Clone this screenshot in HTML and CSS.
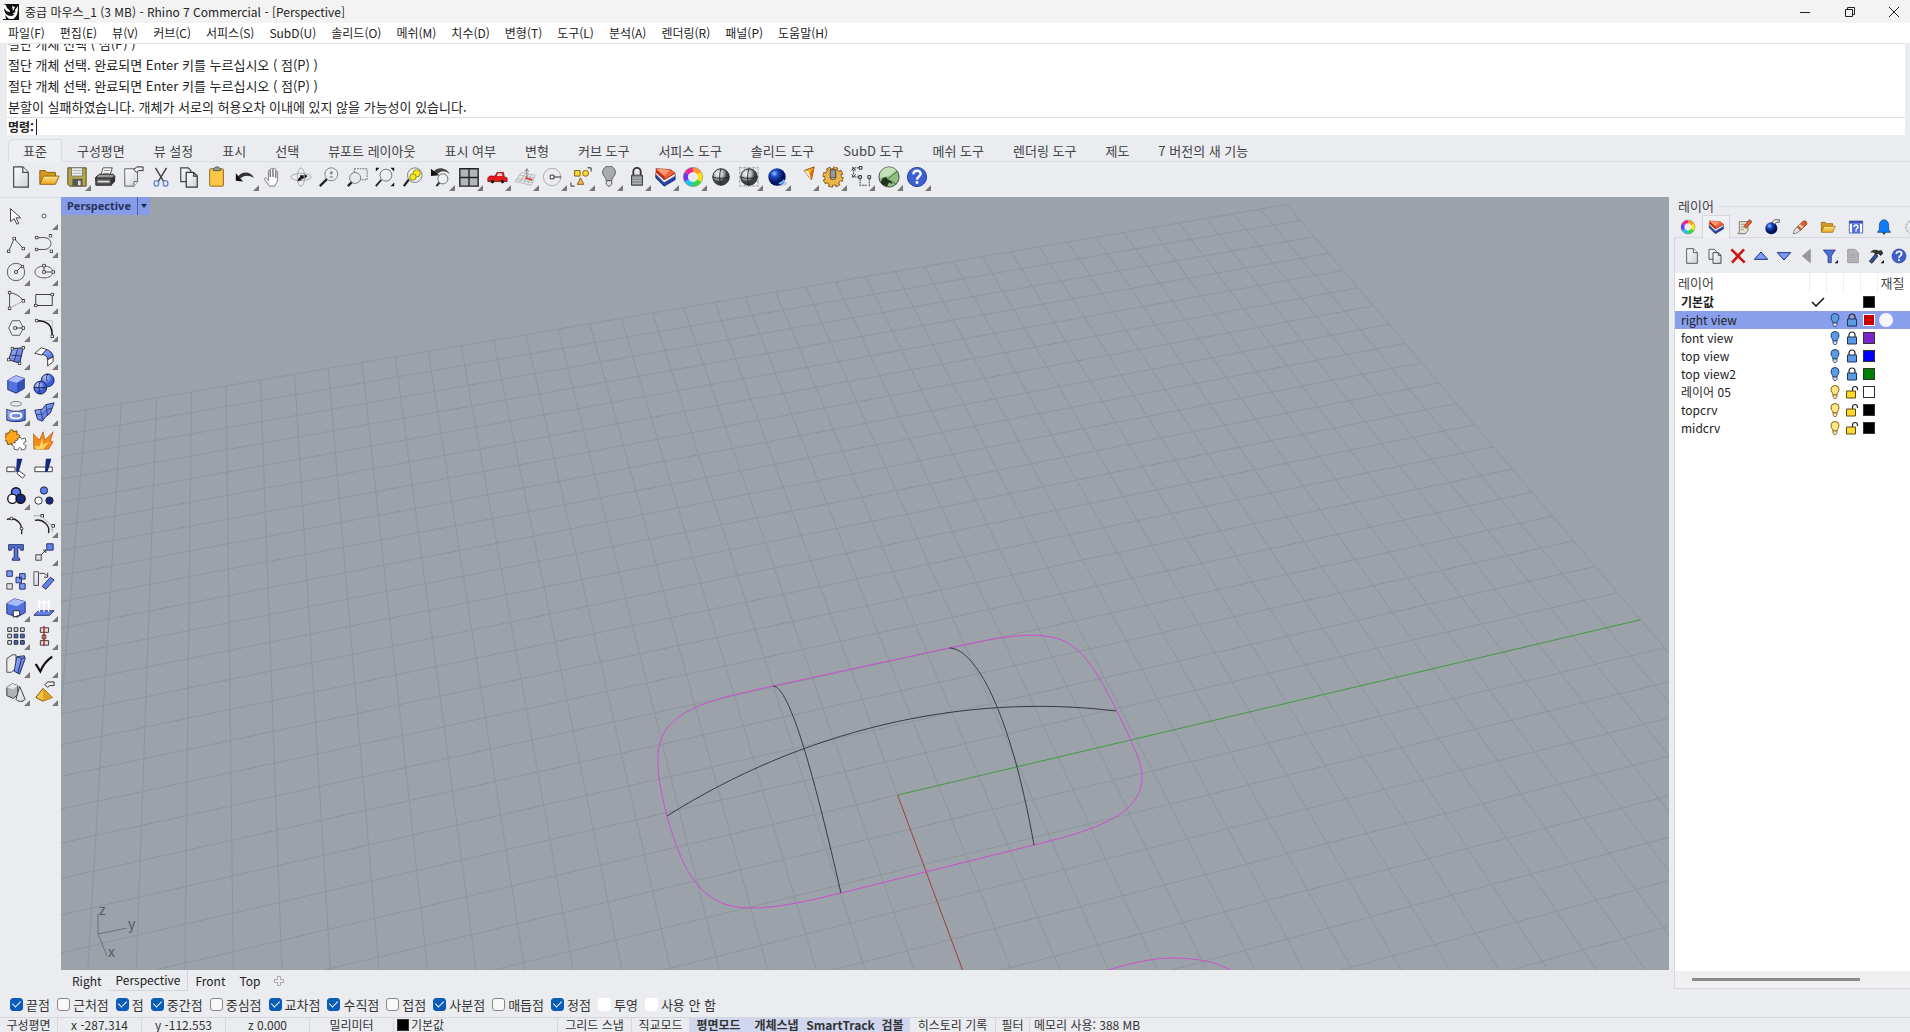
FILE: index.html
```
<!DOCTYPE html>
<html lang="ko">
  <head>
    <meta charset="utf-8"/>
    <title>중급 마우스_1 (3 MB) - Rhino 7 Commercial - [Perspective]</title>
    <link rel="stylesheet" href="styles.css">
  </head>
  <body>
    <!-- shared icons -->
    <svg class="defs" width="0" height="0">
      <defs>
        <linearGradient id="paper" x2="1" y2="1"><stop offset="0" stop-color="#fff"/><stop offset="1" stop-color="#cfd2d4"/></linearGradient>
        <linearGradient id="blue" x2="1" y2="1"><stop offset="0" stop-color="#a9bcff"/><stop offset="1" stop-color="#3f5fd6"/></linearGradient>
        <linearGradient id="gold" x2="0" y2="1"><stop offset="0" stop-color="#ffe48a"/><stop offset="1" stop-color="#eba51c"/></linearGradient>
        <radialGradient id="gray" cx=".35" cy=".3"><stop offset="0" stop-color="#fff"/><stop offset=".6" stop-color="#b2b5b8"/><stop offset="1" stop-color="#3c3e40"/></radialGradient>
        <radialGradient id="deep" cx=".35" cy=".3"><stop offset="0" stop-color="#9fc4ff"/><stop offset=".4" stop-color="#1b50c8"/><stop offset="1" stop-color="#04145c"/></radialGradient>
        <radialGradient id="ball" cx=".35" cy=".3"><stop offset="0" stop-color="#c4d1ff"/><stop offset="1" stop-color="#3c5cd4"/></radialGradient>
      </defs>
      <symbol id="i-page" viewBox="0 0 24 24"><path d="M4 1h10l6 6v16H4z" fill="url(#paper)" stroke="#44474a" stroke-width="1.300"/><path d="M14 1v6h6" fill="#fff" stroke="#44474a" stroke-width="1.300"/></symbol>
      <symbol id="i-copy" viewBox="0 0 24 24"><path d="M3 2h8l3 3v12H3z" fill="url(#paper)" stroke="#44474a" stroke-width="1.300"/><path d="M9 7h8l4 4v12H9z" fill="url(#paper)" stroke="#333639" stroke-width="1.300"/><path d="M17 7v4h4" fill="none" stroke="#333639" stroke-width="1.300"/></symbol>
      <symbol id="i-folder" viewBox="0 0 24 24"><path d="M2 19V5h6l2 2h9v4" fill="#d99a1b" stroke="#7a5a12"/><path d="M2 20l4-9h17l-4 9z" fill="url(#gold)" stroke="#8a6414"/></symbol>
      <symbol id="i-layers" viewBox="0 0 24 24"><path d="M2 8v5l9 9 12-7V9l-12 7z" fill="#2344a8" stroke="#1a2c70"/><path d="M2 6v3l9 9 12-7V8l-12 7z" fill="#f5f5f5" stroke="#777" stroke-width=".6"/><path d="M2 3l9 8v4L2 7z" fill="#c92c0c"/><path d="M2 3l16 1 5 4-12 7v-4z" fill="#f4603a" stroke="#9a2a10"/><path d="M2 3l16 1-7 7z" fill="#ff9a74"/></symbol>
      <symbol id="i-wheel" viewBox="0 0 24 24"><g fill="none" stroke-width="5"><path d="M12 4a8 8 0 0 1 6.9 4" stroke="#ff9a1e"/><path d="M18.9 8a8 8 0 0 1 0 8" stroke="#ffe800"/><path d="M18.9 16a8 8 0 0 1-6.9 4" stroke="#38d838"/><path d="M12 20a8 8 0 0 1-6.9-4" stroke="#18c8e8"/><path d="M5.1 16a8 8 0 0 1 0-8" stroke="#6a36ee"/><path d="M5.1 8A8 8 0 0 1 12 4" stroke="#f0219a"/></g><circle cx="12" cy="12" r="10.5" fill="none" stroke="#777" stroke-width=".6"/></symbol>
      <symbol id="i-help" viewBox="0 0 24 24"><circle cx="12" cy="12" r="10.5" fill="#3d5fd0" stroke="#1f3a96"/><path d="M8 9c0-5 8-5 8-.5 0 3-4 3-4 6.500" fill="none" stroke="#fff" stroke-width="2.500"/><circle cx="12" cy="18" r="1.600" fill="#fff"/></symbol>
      <symbol id="i-bulb-off" viewBox="0 0 14 14"><path d="M5 10c0-2-2-3-2-5.500a4 4 0 0 1 8 0C11 7 9 8 9 10z" fill="#5b9be6" stroke="#23426e"/><path d="M5 10h4v2l-1 1.500H6L5 12z" fill="#d5dde8" stroke="#23426e" stroke-width=".8"/></symbol>
      <symbol id="i-bulb-on" viewBox="0 0 14 14"><path d="M5 10c0-2-2-3-2-5.500a4 4 0 0 1 8 0C11 7 9 8 9 10z" fill="#ffe680" stroke="#80621a"/><path d="M5 10h4v2l-1 1.500H6L5 12z" fill="#f2e3b8" stroke="#80621a" stroke-width=".8"/></symbol>
      <symbol id="i-lock" viewBox="0 0 14 14"><path d="M4 6V4a3 3 0 0 1 6 0v2" fill="none" stroke="#222" stroke-width="1.200"/><path d="M2.500 6h9v7h-9z" fill="#5b9be6" stroke="#1e3250"/></symbol>
      <symbol id="i-unlock" viewBox="0 0 14 14"><path d="M7.500 6V4a2.500 2.500 0 0 1 5 0v1" fill="none" stroke="#222" stroke-width="1.200"/><path d="M1.500 6h9v7h-9z" fill="#ffd92e" stroke="#5a4a10"/></symbol>
      <symbol id="i-pt" viewBox="0 0 4 4"><path d="M.5.5h3v3h-3z" fill="#fff" stroke="#222"/></symbol>
    </svg>

    <header class="titlebar">
      <svg class="logo" viewBox="0 0 16 16"><path d="M0 0h16v16H0z" fill="#111"/><path d="M3 1c0 4 4 4 4 7-3 0-5-2-6-4 0 5 3 8 7 8 3 0 5-3 4-6l3-4c0 7-1 11-5 13H6l-4-4 1 4H0V0z" fill="#fff"/><path d="M9 2l3 1-2 4zM10 9l3-1-2 3z" fill="#fff"/></svg>
      <span class="title">중급 마우스_1 (3 MB) - Rhino 7 Commercial - [Perspective]</span>
      <div class="winbuttons">
        <button aria-label="최소화"><svg viewBox="0 0 12 12"><path d="M1 6.500h10"/></svg></button>
        <button aria-label="이전 크기로"><svg viewBox="0 0 12 12"><path d="M1.500 3.500h7v7h-7zM3.500 3.500v-2h7v7h-2"/></svg></button>
        <button aria-label="닫기"><svg viewBox="0 0 12 12"><path d="M1 1l10 10M11 1L1 11"/></svg></button>
      </div>
    </header>

    <nav class="menubar">
      <a href="#">파일(F)</a><a href="#">편집(E)</a><a href="#">뷰(V)</a><a href="#">커브(C)</a><a href="#">서피스(S)</a><a href="#">SubD(U)</a><a href="#">솔리드(O)</a><a href="#">메쉬(M)</a><a href="#">치수(D)</a><a href="#">변형(T)</a><a href="#">도구(L)</a><a href="#">분석(A)</a><a href="#">렌더링(R)</a><a href="#">패널(P)</a><a href="#">도움말(H)</a>
    </nav>

    <section class="command">
      <div class="history">
        <p>절단 개체 선택 ( 점(P) )</p>
        <p>절단 개체 선택. 완료되면 Enter 키를 누르십시오 ( 점(P) )</p>
        <p>절단 개체 선택. 완료되면 Enter 키를 누르십시오 ( 점(P) )</p>
        <p>분할이 실패하였습니다. 개체가 서로의 허용오차 이내에 있지 않을 가능성이 있습니다.</p>
      </div>
      <div class="prompt">
        <label for="cmd">명령:</label>
        <input type="text" id="cmd">
      </div>
    </section>

    <div class="tooltabs">
      <button class="active">표준</button><button>구성평면</button><button>뷰 설정</button><button>표시</button><button>선택</button><button>뷰포트 레이아웃</button><button>표시 여부</button><button>변형</button><button>커브 도구</button><button>서피스 도구</button><button>솔리드 도구</button><button>SubD 도구</button><button>메쉬 도구</button><button>렌더링 도구</button><button>제도</button><button>7 버전의 새 기능</button>
    </div>

    <div class="toolbar">
      <button aria-label="새로 만들기"><svg><use href="#i-page"/></svg></button>
      <button aria-label="열기"><svg><use href="#i-folder"/></svg></button>
      <button aria-label="저장" class="fly"><svg viewBox="0 0 24 24"><path d="M2 2h20v20H4l-2-2z" fill="#b5a648" stroke="#4b4620"/><path d="M6 2h12v9H6z" fill="#eef0f2" stroke="#777"/><path d="M7 5h10M7 8h10" stroke="#aaa"/><path d="M7 14h11v8H7z" fill="#555"/><path d="M13 16h3v5h-3z" fill="#ddd"/></svg></button>
      <button aria-label="인쇄"><svg viewBox="0 0 24 24"><path d="M7 11l3-9h10l-3 9z" fill="#fff" stroke="#444"/><path d="M11 5h6M10 8h6" stroke="#777"/><path d="M2 12l4-3h15l2 3-3 4H2z" fill="#999" stroke="#222"/><path d="M2 13h17v8H2z" fill="#555" stroke="#222"/><path d="M19 13l4-3v7l-4 4z" fill="#333"/><path d="M4 17h13" stroke="#ddd" stroke-width="2"/></svg></button>
      <button aria-label="문서 속성"><svg viewBox="0 0 24 24"><path d="M3 3h14v14l-4 5H3z" fill="url(#paper)" stroke="#55585b"/><path d="M17 17h-4v5" fill="#fff" stroke="#55585b"/><path d="M13 4l3-3h7v4h-5l-2 2z" fill="#eee" stroke="#222"/></svg></button>
      <button aria-label="잘라내기"><svg viewBox="0 0 24 24" fill="none"><path d="M6 2l9 15M18 2L9 17" stroke="#444" stroke-width="1.600"/><ellipse cx="7" cy="19" rx="2.500" ry="3" stroke="#6c87c6" stroke-width="1.500"/><ellipse cx="17" cy="19" rx="2.500" ry="3" stroke="#6c87c6" stroke-width="1.500"/></svg></button>
      <button aria-label="복사"><svg><use href="#i-copy"/></svg></button>
      <button aria-label="붙여넣기"><svg viewBox="0 0 24 24"><rect x="4" y="3" width="15" height="19" rx="1" fill="#fcc647" stroke="#8c6510"/><path d="M8 5V3l3-2h2l3 2v2z" fill="#999" stroke="#555"/></svg></button>
      <button aria-label="실행 취소" class="fly"><svg viewBox="0 0 24 24"><path d="M4 12c5-7 14-6 18 1-6-3-11-3-14 0z" fill="#333"/><path d="M2 8v8l8 1z" fill="#111"/></svg></button>
      <button aria-label="이동"><svg viewBox="0 0 24 24"><path d="M8 22l-5-7c-1-2 1-3 2-1l2 2V6c0-2 2-2 2 0v6-8c0-2 3-2 3 0v8-8c0-2 3-2 3 0v9-6c0-2 2-2 2 0v9l-3 6z" fill="#fff" stroke="#555" stroke-width=".8"/></svg></button>
      <button aria-label="회전"><svg viewBox="0 0 24 24" fill="none" stroke="#999" stroke-width=".8"><ellipse cx="12" cy="12" rx="11" ry="4"/><ellipse cx="12" cy="12" rx="4" ry="10"/><path d="M11 10h4v4h-4zM8 17l2-5 3 3zM16 9l3 2-3 3z" fill="#111" stroke="none"/></svg></button>
      <button aria-label="동적 줌"><svg viewBox="0 0 24 24" fill="none"><path d="M10 14l-8 8" stroke="#222" stroke-width="2.500"/><circle cx="14.500" cy="9" r="7" fill="#edf0f2" stroke="#777"/><path d="M12.500 7.500h4M14.500 5.500v4M12.500 12h4" stroke="#444" stroke-width=".8"/></svg></button>
      <button aria-label="창 줌"><svg viewBox="0 0 24 24" fill="none"><path d="M9 3h14v12H9z" stroke="#666" stroke-dasharray="2 1"/><path d="M7 17l-5 5" stroke="#222" stroke-width="2.500"/><circle cx="10" cy="13" r="6" fill="#e6e9ec" stroke="#777"/></svg></button>
      <button aria-label="범위 줌"><svg viewBox="0 0 24 24" fill="none"><path d="M8 15l-6 7" stroke="#222" stroke-width="2"/><circle cx="13" cy="10" r="6.500" fill="#edf0f2" stroke="#666"/><path d="M2 6V2h4zM18 2h4v4zM22 18v4h-4z" fill="#111"/></svg></button>
      <button aria-label="선택 줌"><svg viewBox="0 0 24 24" fill="none"><path d="M8 14l-6 8" stroke="#222" stroke-width="2.500"/><circle cx="14" cy="10" r="8" fill="#edf0f2" stroke="#777"/><circle cx="16" cy="8" r="4" fill="#f8e71c" stroke="#8d8410"/><circle cx="12" cy="12" r="3.500" fill="#f8e71c" stroke="#8d8410"/></svg></button>
      <button aria-label="뷰 변경 취소" class="fly"><svg viewBox="0 0 24 24" fill="none"><path d="M11 17l-4 5" stroke="#222" stroke-width="2"/><circle cx="14" cy="14" r="5.500" fill="#edf0f2" stroke="#666"/><path d="M4 6c5-6 14-4 18 3-5-4-10-5-14 0z" fill="#444"/><path d="M1 3v8l9-1z" fill="#111"/></svg></button>
      <button aria-label="4개 뷰포트" class="fly"><svg viewBox="0 0 24 24"><path d="M2 3h20v19H2z" fill="#b3b6b9" stroke="#222" stroke-width="1.500"/><path d="M12 3v19M2 12.500h20" stroke="#222" stroke-width="1.500"/></svg></button>
      <button aria-label="뷰 설정" class="fly"><svg viewBox="0 0 24 24"><path d="M2 13l2-2h6l2-4h7l1 5 3 1v4H2z" fill="#e31b1b" stroke="#7c0808" stroke-width=".8"/><path d="M12 11l1-3h4l1 3z" fill="#ffd2d2"/><circle cx="7" cy="17" r="2" fill="#222"/><circle cx="18" cy="17" r="2" fill="#222"/></svg></button>
      <button aria-label="구성평면" class="fly"><svg viewBox="0 0 24 24" fill="none"><path d="M1 17l7-10 15 3-4 11zM4 13l17 3M2.500 15l18 3M6 10l16 3M12 8L6 18M16 9l-5.500 10M19 9.500L15 20" stroke="#aaa" stroke-width=".8"/><path d="M14 13V4M12 6l2-3 2 3" stroke="#555" stroke-width=".8"/><path d="M12 13l8 2" stroke="#e22" stroke-width="1.500"/></svg></button>
      <button aria-label="개체 스냅" class="fly"><svg viewBox="0 0 24 24" fill="none"><circle cx="11" cy="12" r="9.500" stroke="#aaa"/><path d="M10 12h11" stroke="#222"/><path d="M9 10h4v4H9z" fill="#fff" stroke="#222"/></svg></button>
      <button aria-label="선택" class="fly"><svg viewBox="0 0 24 24" stroke="#7c5a10"><path d="M5 5h6v6H5z" fill="#ffd92e"/><circle cx="17" cy="8" r="3.200" fill="#ffd92e"/><path d="M8 20l3.500-7 3.500 7z" fill="#f9b35a"/><path d="M19 2h4v4M1 18v4h4" fill="none" stroke="#222"/></svg></button>
      <button aria-label="숨기기" class="fly"><svg viewBox="0 0 24 24"><path d="M9 16c0-4-4-5-4-9a7 7 0 0 1 14 0c0 4-4 5-4 9z" fill="#a9abad" stroke="#555"/><path d="M9 16h6v4l-2 2h-2l-2-2z" fill="#ddd" stroke="#555"/></svg></button>
      <button aria-label="잠금" class="fly"><svg viewBox="0 0 24 24"><path d="M8 10V6a4 4 0 0 1 8 0v4" fill="none" stroke="#333" stroke-width="2"/><path d="M6 10h12v11H6z" fill="#8a8d90" stroke="#333"/><path d="M7 13h10M7 16h10M7 19h10" stroke="#bbb"/></svg></button>
      <button aria-label="레이어" class="fly"><svg><use href="#i-layers"/></svg></button>
      <button aria-label="개체 속성" class="fly"><svg><use href="#i-wheel"/></svg></button>
      <button aria-label="음영 처리"><svg viewBox="0 0 24 24"><circle cx="12" cy="12" r="9" fill="url(#gray)" stroke="#222"/><path d="M12 3c-2 5-2 13 0 18M3 12c5 2 13 2 18 0" fill="none" stroke="#222"/></svg></button>
      <button aria-label="음영 처리 모드" class="fly"><svg viewBox="0 0 24 24"><path d="M1 2h22M1 7h22M1 12h22M1 17h22M1 22h22M2 1v22M7 1v22M12 1v22M17 1v22M22 1v22" stroke="#888" stroke-dasharray="1 1"/><circle cx="12" cy="12" r="9" fill="url(#gray)" stroke="#222"/><path d="M12 3c-2 5-2 13 0 18M3 12c5 2 13 2 18 0" fill="none" stroke="#222"/></svg></button>
      <button aria-label="렌더링" class="fly"><svg viewBox="0 0 24 24"><ellipse cx="15" cy="19" rx="8" ry="3" fill="#bcc6de"/><circle cx="12" cy="12" r="9.500" fill="url(#deep)"/><path d="M14 19c3 0 5-2 6-4" fill="none" stroke="#6fc0ff" stroke-width="2"/></svg></button>
      <button aria-label="광원" class="fly"><svg viewBox="0 0 24 24"><path d="M11 5l11-4-3 14z" fill="#f9b52c" stroke="#7c4a10"/><path d="M11 5l5 1 3 9z" fill="#fff0c4"/><path d="M22 1l-3 14-2-7z" fill="#df6a10"/></svg></button>
      <button aria-label="옵션" class="fly"><svg viewBox="0 0 24 24" fill="none"><circle cx="12" cy="12" r="9" stroke="#6c4a10" stroke-width="5" stroke-dasharray="4.500 2.568"/><circle cx="12" cy="12" r="6" stroke="#6c4a10" stroke-width="7"/><circle cx="12" cy="12" r="6" stroke="#edb446" stroke-width="5.500"/><circle cx="12" cy="12" r="9" stroke="#edb446" stroke-width="3.500" stroke-dasharray="3 4.068" stroke-dashoffset="-.7"/><path d="M9 4h6v9H9z" fill="#999" stroke="#444"/></svg></button>
      <button aria-label="치수" class="fly"><svg viewBox="0 0 24 24" fill="none" stroke="#222"><path d="M2 2h8M2 12h8M4 4v6M11 14v8M21 14v8M13 21h6" stroke-dasharray="2 1"/><path d="M10 .5h3v3h-3zM9.500 10.500h3v3h-3zM19.500 10.500h3v3h-3zM2 5l2-3 2 3M2 9l2 3 2-3"/></svg></button>
      <button aria-label="Grasshopper" class="fly"><svg viewBox="0 0 24 24"><circle cx="12" cy="12" r="11" fill="#8fbf82" stroke="#444"/><path d="M4 5c4-5 12-5 16 0l-8 6-10 2c0-3 0-5 2-8z" fill="#c2dfb7"/><path d="M3 18l2-5 4-1 2 3 3 1 2 4-4-2-2 4-4-1z" fill="#223322"/><path d="M11 14l10-8M14 16l6 4" stroke="#4a6a44"/></svg></button>
      <button aria-label="도움말" class="fly"><svg><use href="#i-help"/></svg></button>
    </div>

    <main class="workspace">
      <aside class="sidebar">
        <button aria-label="선택"><svg viewBox="0 0 24 24"><path d="M6 4v14l4-3 3 6 2-1-3-6h5z" fill="#fff" stroke="#333"/></svg></button>
        <button aria-label="점" class="fly"><svg viewBox="0 0 24 24"><circle cx="12" cy="12" r="2.200" fill="#fff" stroke="#444"/></svg></button>
        <button aria-label="폴리라인" class="fly"><svg viewBox="0 0 24 24"><path d="M4 20L10 6l10 11" fill="none" stroke="#444"/><use href="#i-pt" x="2" y="18" width="4" height="4"/><use href="#i-pt" x="8" y="4" width="4" height="4"/><use href="#i-pt" x="18" y="15" width="4" height="4"/></svg></button>
        <button aria-label="커브" class="fly"><svg viewBox="0 0 24 24"><path d="M4 5h8c10 0 10 13 0 13H4" fill="none" stroke="#444"/><use href="#i-pt" x="2" y="3" width="4" height="4"/><use href="#i-pt" x="17" y="1" width="4" height="4"/><use href="#i-pt" x="2" y="16" width="4" height="4"/><use href="#i-pt" x="18" y="18" width="4" height="4"/></svg></button>
        <button aria-label="원" class="fly"><svg viewBox="0 0 24 24"><circle cx="12" cy="12" r="9.500" fill="none" stroke="#555"/><path d="M12 12l6-6" stroke="#333"/><use href="#i-pt" x="10" y="10" width="4" height="4"/><use href="#i-pt" x="17" y="4" width="4" height="4"/></svg></button>
        <button aria-label="타원" class="fly"><svg viewBox="0 0 24 24"><ellipse cx="12" cy="12" rx="10" ry="6.500" fill="none" stroke="#555"/><path d="M12 6v6h10" fill="none" stroke="#333"/><use href="#i-pt" x="10" y="10" width="4" height="4"/><use href="#i-pt" x="10" y="3" width="4" height="4"/><use href="#i-pt" x="20" y="10" width="4" height="4"/></svg></button>
        <button aria-label="호" class="fly"><svg viewBox="0 0 24 24"><path d="M5 21V4c7 1 12 4 15 9" fill="none" stroke="#444"/><path d="M5 21l15-8" stroke="#888" stroke-dasharray="2 1"/><use href="#i-pt" x="3" y="2" width="4" height="4"/><use href="#i-pt" x="3" y="19" width="4" height="4"/><use href="#i-pt" x="18" y="11" width="4" height="4"/></svg></button>
        <button aria-label="직사각형" class="fly"><svg viewBox="0 0 24 24"><path d="M3 6h18v12H3z" fill="none" stroke="#333"/><use href="#i-pt" x="19" y="4" width="4" height="4"/><use href="#i-pt" x="1" y="16" width="4" height="4"/></svg></button>
        <button aria-label="다각형" class="fly"><svg viewBox="0 0 24 24"><path d="M4 12l4-8h8l4 8-4 8H8z" fill="none" stroke="#555"/><path d="M12 12h8" stroke="#333"/><use href="#i-pt" x="9" y="10" width="4" height="4"/><use href="#i-pt" x="18" y="10" width="4" height="4"/></svg></button>
        <button aria-label="필렛" class="fly"><svg viewBox="0 0 24 24"><path d="M4 4h17v18" fill="none" stroke="#bbb"/><path d="M4 4c12 0 17 5 17 17" fill="none" stroke="#111" stroke-width="1.600"/><use href="#i-pt" x="2" y="2" width="4" height="4"/><use href="#i-pt" x="19" y="19" width="4" height="4"/></svg></button>
        <button aria-label="서피스" class="fly"><svg viewBox="0 0 24 24"><path d="M8 4l12-1-4 17-12-4z" fill="url(#blue)" stroke="#223"/><path d="M14 3.500L10 18M6 11l12 1" stroke="#223" stroke-width=".8"/><use href="#i-pt" x="6" y="2" width="4" height="4"/><use href="#i-pt" x="18" y="1" width="4" height="4"/><use href="#i-pt" x="2" y="14" width="4" height="4"/><use href="#i-pt" x="14" y="18" width="4" height="4"/></svg></button>
        <button aria-label="서피스 필렛" class="fly"><svg viewBox="0 0 24 24"><path d="M2 9l7-6 6 2-5 6z" fill="#fff" stroke="#333"/><path d="M15 5c5 2 7 5 7 8l-6 3c0-3-2-5-6-6z" fill="url(#blue)" stroke="#223"/><path d="M22 13v5l-6 5v-7z" fill="#fff" stroke="#333"/></svg></button>
        <button aria-label="솔리드" class="fly"><svg viewBox="0 0 24 24"><path d="M3 8l9-5 9 3v11l-9 5-9-4z" fill="#5272e0" stroke="#1c2a60"/><path d="M3 8l9-5 9 3-8 5z" fill="#a9bcff"/><path d="M13 11l8-5v11l-8 5z" fill="#3450b8"/></svg></button>
        <button aria-label="부울" class="fly"><svg viewBox="0 0 24 24"><circle cx="16" cy="8" r="7" fill="url(#ball)" stroke="#172050"/><circle cx="8" cy="16" r="7" fill="url(#ball)" stroke="#172050"/><path d="M8 9c-2 4-2 9 0 14M1 16h14M16 1c-2 4-2 6 0 8" fill="none" stroke="#172050"/></svg></button>
        <button aria-label="투영" class="fly"><svg viewBox="0 0 24 24"><ellipse cx="12" cy="3" rx="6" ry="2.500" fill="none" stroke="#777"/><path d="M2 9c6 3 14 3 20 0v12c-6 2-14 2-20 0z" fill="url(#blue)" stroke="#1c2a60"/><ellipse cx="12" cy="16" rx="6" ry="3" fill="none" stroke="#fff" stroke-width="2"/></svg></button>
        <button aria-label="메쉬" class="fly"><svg viewBox="0 0 24 24"><path d="M2 10l8-1 4-5 9-2-4 11-5 4-4 5-5-2z" fill="url(#blue)" stroke="#1c2a60"/><path d="M8 9l3 12M14 4l2 12M4 15l7-1 5-5 5-1" fill="none" stroke="#1c2a60" stroke-width=".8"/></svg></button>
        <button aria-label="결합"><svg viewBox="0 0 24 24"><path d="M1 5l4-1c-1-4 5-4 4-1l4-1v4c4-1 4 5 1 4l1 4-4 1c1 3-5 4-4 1l-4 1-1-4c-3 1-4-4-1-4z" fill="#fba61d" stroke="#6c4208"/><path d="M11 13l3-1c-1-3 4-4 4-1l4-1 1 4c-4 0-3 4 0 4l-1 4-4 1c0-4-4-3-4 0l-4-1v-3c-3 0-3-5 1-4z" fill="#fff" stroke="#555"/></svg></button>
        <button aria-label="분해"><svg viewBox="0 0 24 24"><path d="M1 22L0 5l7 7 4-9 2 9 9-9-3 10 3 1-5 8z" fill="#f08a1d" stroke="#a34a08" stroke-width=".6"/><path d="M3 22l-1-4 5 1 3-9 1 7 7-3-7 8z" fill="#ffd25a"/></svg></button>
        <button aria-label="트림"><svg viewBox="0 0 24 24"><path d="M2 11h9v5H2zM15 15l7 5-3 3-6-5z" fill="#fff" stroke="#333"/><path d="M13 2h6l-4 14h-3z" fill="#17297c"/></svg></button>
        <button aria-label="분할"><svg viewBox="0 0 24 24"><path d="M2 11h19v5H2z" fill="#fff" stroke="#333"/><path d="M14 2h6l-4 14h-3z" fill="#17297c"/></svg></button>
        <button aria-label="그룹" class="fly"><svg viewBox="0 0 24 24" stroke="#111" stroke-width="1.500"><circle cx="12" cy="8" r="5" fill="#5b7bf2"/><circle cx="8" cy="15" r="5" fill="#fff"/><circle cx="17" cy="15" r="5" fill="#17297c"/></svg></button>
        <button aria-label="그룹 해제"><svg viewBox="0 0 24 24" stroke="#222"><circle cx="12" cy="6" r="4" fill="#5b7bf2"/><circle cx="6" cy="17" r="4" fill="#fff"/><circle cx="18" cy="17" r="4" fill="#17297c"/></svg></button>
        <button aria-label="점 편집"><svg viewBox="0 0 24 24"><path d="M2 7c11-3 18 5 16 16" fill="none" stroke="#222" stroke-width="1.500"/><circle cx="7" cy="6" r="1.500" fill="#fff" stroke="#222"/><circle cx="18" cy="17" r="1.500" fill="#fff" stroke="#222"/></svg></button>
        <button aria-label="제어점" class="fly"><svg viewBox="0 0 24 24"><path d="M2 8c9-2 17 6 15 14" fill="none" stroke="#222" stroke-width="1.500"/><path d="M1 3h8l12 12v6" fill="none" stroke="#777" stroke-dasharray="2 1"/><use href="#i-pt" x="8" y="1" width="4" height="4"/><use href="#i-pt" x="20" y="12" width="4" height="4"/></svg></button>
        <button aria-label="문자"><svg viewBox="0 0 24 24"><path d="M4 4h16v6h-3l-1-3h-2v11l2 1v2H8v-2l2-1V7H8l-1 3H4z" fill="#5272e0" stroke="#1c2a60"/></svg></button>
        <button aria-label="이동" class="fly"><svg viewBox="0 0 24 24"><path d="M15 3h7v7h-7z" fill="#6482ee" stroke="#1c2a60"/><path d="M3 15h6v6H3z" fill="#ddd" stroke="#444"/><path d="M9 15l5-5M11 10h3v3" stroke="#222" fill="none"/></svg></button>
        <button aria-label="복사"><svg viewBox="0 0 24 24"><path d="M2 2h6v6H2zM16 5h6v6h-6zM12 9h6v6h-6zM16 16h6v6h-6z" fill="#7f9af5" stroke="#1c2a60"/><path d="M2 16h6v6H2z" fill="#ddd" stroke="#444"/></svg></button>
        <button aria-label="회전"><svg viewBox="0 0 24 24"><path d="M1 3h5v15H1z" fill="url(#paper)" stroke="#444"/><path d="M10 19L19 9l4 3-9 10z" fill="#6482ee" stroke="#1c2a60"/><path d="M7 5c4-1 7 0 9 3M16 4v5h-4" fill="none" stroke="#333"/></svg></button>
        <button aria-label="크기 조정" class="fly"><svg viewBox="0 0 24 24"><path d="M2 7l8-5 12 3v12l-9 5-11-4z" fill="#5272e0" stroke="#1c2a60"/><path d="M2 7l8-5 12 3-9 5z" fill="#a9bcff"/><path d="M9 15h7v5l-7 2z" fill="#fff" stroke="#222"/></svg></button>
        <button aria-label="오프셋" class="fly"><svg viewBox="0 0 24 24"><path d="M1 20l5-5h17l-5 5z" fill="#6482ee" stroke="#1c2a60"/><path d="M7 16V4M12 16V4M17 16V4M5 7l2-3 2 3M10 7l2-3 2 3M15 7l2-3 2 3" fill="none" stroke="#fff" stroke-width="1.500"/></svg></button>
        <button aria-label="배열" class="fly"><svg viewBox="0 0 24 24" stroke="#222"><path d="M3 3h4v4H3zM10 3h4v4h-4zM17 3h4v4h-4zM3 10h4v4H3zM3 17h4v4H3z" fill="#dfe5ff"/><path d="M10 10h4v4h-4zM17 10h4v4h-4zM10 17h4v4h-4zM17 17h4v4h-4z" fill="#4a68dc"/></svg></button>
        <button aria-label="정렬" class="fly"><svg viewBox="0 0 24 24"><path d="M8 3h9v5H8zM10 11h4v4h-4zM8 17h9v5H8z" fill="#ddd" stroke="#333"/><path d="M12 1v22" stroke="#d11" stroke-width="1.500"/></svg></button>
        <button aria-label="방향" class="fly"><svg viewBox="0 0 24 24"><path d="M2 6l6-4h4v15l-5 4H2z" fill="#eee" stroke="#444"/><path d="M13 4l8-1 1 3-6 17-6-3z" fill="url(#blue)" stroke="#1c2a60"/><path d="M13 4l5 2 4-1M18 6l-4 16" fill="none" stroke="#1c2a60"/></svg></button>
        <button aria-label="확인" class="fly"><svg viewBox="0 0 24 24"><path d="M3 12l5 8C11 13 15 8 21 4" fill="none" stroke="#111" stroke-width="2.500"/></svg></button>
        <button aria-label="블록" class="fly"><svg viewBox="0 0 24 24"><path d="M2 7l6-4 6 2v10l-5 4-7-3z" fill="#b0b3b6" stroke="#333"/><path d="M2 7l6-4 6 2-5 4z" fill="#e4e6e8"/><path d="M16 6l6 14c-2 3-8 3-10 0z" fill="url(#paper)" stroke="#333"/></svg></button>
        <button aria-label="분석" class="fly"><svg viewBox="0 0 24 24"><path d="M11 8l10 10-10 4-8-4z" fill="#f6c343" stroke="#6c4a08"/><path d="M11 8l10 10-10 4z" fill="#e0a020"/><path d="M13 4l3-3h7v4h-5l-2 2z" fill="#eee" stroke="#222"/></svg></button>
      </aside>

      <section class="viewarea">
        <div class="viewport">
          <svg class="scene" viewBox="61 197 1608 773" preserveAspectRatio="xMinYMin slice">
            <g id="grid" class="grid"></g>
            <g id="axes"></g>
            <path class="outline" d="M773 686L949 648C1000 637 1040 629 1066 642C1090 655 1103 685 1117 711C1128 735 1142 760 1142 777C1142 815 1095 830 1034 845L841 893C800 903 775 908 750 908C700 908 682 870 667 816C660 790 657 770 658 755C660 710 710 700 773 686Z"/>
            <path class="outline" d="M1105 971C1140 960 1160 958 1175 958C1205 959 1218 963 1232 971"/>
            <path class="curve" d="M773 686C790 686 815 780 841 893M949 648C975 648 1010 710 1034 845M667 816C800 732 960 692 1116 711"/>
            <path class="triad" d="M98 914V934L127 928M98 934L107 956"/>
            <g class="triadtext"><text x="99" y="915">z</text><text x="128" y="929">y</text><text x="108" y="957">x</text></g>
          </svg>
          <button class="viewname"><span>Perspective</span><i></i></button>
        </div>
        <div class="viewtabs">
          <button>Right</button><button class="active">Perspective</button><button>Front</button><button>Top</button>
          <button aria-label="뷰포트 추가"><svg viewBox="0 0 10 10"><path d="M3.500.5h3v3h3v3h-3v3h-3v-3h-3v-3h3z"/></svg></button>
        </div>
      </section>

      <aside class="panel">
        <h2>레이어</h2>
        <div class="paneltabs">
          <button aria-label="속성"><svg><use href="#i-wheel"/></svg></button>
          <button aria-label="레이어" class="active"><svg><use href="#i-layers"/></svg></button>
          <button aria-label="메모"><svg viewBox="0 0 24 24"><path d="M5 4h13v13l-4 5H3c3-2 2-10 2-18z" fill="#e8e2d0" stroke="#444"/><path d="M7 8h7M7 12h7M7 16h5" stroke="#777"/><path d="M12 11l8-10 4 3-9 10z" fill="#e8622a" stroke="#7c2a08"/></svg></button>
          <button aria-label="렌더링"><svg viewBox="0 0 24 24"><circle cx="11" cy="14" r="9" fill="url(#deep)"/><path d="M12 5l4-4h7v4h-5l-2 3z" fill="#eee" stroke="#222"/></svg></button>
          <button aria-label="재질"><svg viewBox="0 0 24 24"><path d="M2 22c0-5 3-8 6-10l5 4c-3 4-6 6-11 6z" fill="#ddd" stroke="#555"/><path d="M8 12l9-9c4-1 6 2 5 5l-9 9z" fill="#e0622a" stroke="#6c2a08"/><path d="M11 9l5 4" stroke="#f5e6dc" stroke-width="3"/></svg></button>
          <button aria-label="라이브러리"><svg><use href="#i-folder"/></svg></button>
          <button aria-label="도움말"><svg viewBox="0 0 24 24"><path d="M2 3h20v18H2z" fill="#fff" stroke="#1c2a80"/><path d="M2 3h20v4H2z" fill="#3b51b5"/><path d="M6 7h12v14H6z" fill="#5272d8"/><path d="M9 12c0-4 6-4 6 0 0 2-3 2-3 4M12 17v2" stroke="#fff" stroke-width="2" fill="none"/></svg></button>
          <button aria-label="알림"><svg viewBox="0 0 24 24"><path d="M12 1c5 1 7 4 7 9v6l3 4H2l3-4v-6c0-5 2-8 7-9z" fill="#0b7cf2" stroke="#123a6c"/><path d="M9 20h6l-3 4z" fill="#123a6c"/></svg></button>
          <button aria-label="표시"><svg viewBox="0 0 24 24"><circle cx="12" cy="12" r="9" fill="none" stroke="#b4b8bd" stroke-width="3" stroke-dasharray="3 2"/></svg></button>
        </div>
        <div class="paneltools">
          <button aria-label="새 레이어"><svg><use href="#i-page"/></svg></button>
          <button aria-label="새 하위 레이어"><svg><use href="#i-copy"/></svg></button>
          <button aria-label="삭제"><svg viewBox="0 0 24 24"><path d="M2 2l20 20M21 2L3 22" stroke="#cc1515" stroke-width="4"/></svg></button>
          <button aria-label="위로"><svg viewBox="0 0 24 24"><path d="M2 17L12 6l10 11z" fill="#7f9cf5" stroke="#1c2a80" stroke-width="1.500"/></svg></button>
          <button aria-label="아래로"><svg viewBox="0 0 24 24"><path d="M2 7l10 11L22 7z" fill="#7f9cf5" stroke="#1c2a80" stroke-width="1.500"/></svg></button>
          <button aria-label="한 수준 위로"><svg viewBox="0 0 24 24"><path d="M17 2v20L5 12z" fill="#999" stroke="#888"/></svg></button>
          <button aria-label="필터"><svg viewBox="0 0 24 24"><path d="M2 3h18l-6 9v10h-5V12z" fill="#4f70d8" stroke="#1c2a80"/><path d="M19 23h5v-5z" fill="#111"/></svg></button>
          <button aria-label="레이어 상태"><svg viewBox="0 0 24 24"><path d="M4 2h11l5 5v15H4z" fill="#b5b5b5" stroke="#888"/><path d="M7 10h9M7 14h9M7 18h9" stroke="#999"/></svg></button>
          <button aria-label="도구"><svg viewBox="0 0 24 24"><path d="M3 7c4-5 8-5 13-3l4-1 3 5-4 4-3-3-4 1-3-3c-2-1-4-1-6 0z" fill="#333"/><path d="M11 9l4 3-9 11-4-3z" fill="#354a9a" stroke="#111"/><path d="M19 23h5v-5z" fill="#111"/></svg></button>
          <button aria-label="도움말"><svg><use href="#i-help"/></svg></button>
        </div>
        <div class="layerlist">
          <table>
            <thead>
              <tr><th>레이어</th><th></th><th></th><th></th><th></th><th>재질</th></tr>
            </thead>
            <tbody>
              <tr class="current"><td>기본값</td><td><svg class="check" viewBox="0 0 14 10"><path d="M1 5l4 4 8-8"/></svg></td><td></td><td></td><td><i class="swatch black"></i></td><td></td></tr>
              <tr class="selected"><td>right view</td><td></td><td><svg><use href="#i-bulb-off"/></svg></td><td><svg><use href="#i-lock"/></svg></td><td><i class="swatch red"></i></td><td><i class="material"></i></td></tr>
              <tr><td>font view</td><td></td><td><svg><use href="#i-bulb-off"/></svg></td><td><svg><use href="#i-lock"/></svg></td><td><i class="swatch purple"></i></td><td></td></tr>
              <tr><td>top view</td><td></td><td><svg><use href="#i-bulb-off"/></svg></td><td><svg><use href="#i-lock"/></svg></td><td><i class="swatch blue"></i></td><td></td></tr>
              <tr><td>top view2</td><td></td><td><svg><use href="#i-bulb-off"/></svg></td><td><svg><use href="#i-lock"/></svg></td><td><i class="swatch green"></i></td><td></td></tr>
              <tr><td>레이어 05</td><td></td><td><svg><use href="#i-bulb-on"/></svg></td><td><svg><use href="#i-unlock"/></svg></td><td><i class="swatch white"></i></td><td></td></tr>
              <tr><td>topcrv</td><td></td><td><svg><use href="#i-bulb-on"/></svg></td><td><svg><use href="#i-unlock"/></svg></td><td><i class="swatch black"></i></td><td></td></tr>
              <tr><td>midcrv</td><td></td><td><svg><use href="#i-bulb-on"/></svg></td><td><svg><use href="#i-unlock"/></svg></td><td><i class="swatch black"></i></td><td></td></tr>
            </tbody>
          </table>
          <div class="scrollbar"><i></i></div>
        </div>
      </aside>
    </main>

    <div class="osnap">
      <label><input type="checkbox" checked>끝점</label>
      <label><input type="checkbox">근처점</label>
      <label><input type="checkbox" checked>점</label>
      <label><input type="checkbox" checked>중간점</label>
      <label><input type="checkbox">중심점</label>
      <label><input type="checkbox" checked>교차점</label>
      <label><input type="checkbox" checked>수직점</label>
      <label><input type="checkbox">접점</label>
      <label><input type="checkbox" checked>사분점</label>
      <label><input type="checkbox">매듭점</label>
      <label><input type="checkbox" checked>정점</label>
      <label><input type="checkbox" class="plain">투영</label>
      <label><input type="checkbox" class="plain">사용 안 함</label>
    </div>

    <footer class="status">
      <button class="w58">구성평면</button>
      <span class="w84">x -287.314</span>
      <span class="w84">y -112.553</span>
      <span class="w84">z 0.000</span>
      <button class="w84">밀리미터</button>
      <button class="layer"><i class="swatch black"></i>기본값</button>
      <button class="w74">그리드 스냅</button>
      <button class="w58">직교모드</button>
      <button class="w58 on">평면모드</button>
      <button class="w58 on">개체스냅</button>
      <button class="w70 on">SmartTrack</button>
      <button class="w34 on">검볼</button>
      <button class="w86">히스토리 기록</button>
      <button class="w34">필터</button>
      <span class="memory">메모리 사용: 388 MB</span>
    </footer>

    <script src="script.js"></script>
  </body>
</html>
```
FILE: styles.css
```
* {
  box-sizing: border-box;
}

body {
  margin: 0;
  height: 100vh;
  display: flex;
  flex-direction: column;
  overflow: hidden;
  background-color: #eaecf0;
  color: #222;
  font-family: "Noto Sans CJK KR", "Noto Sans", sans-serif;
  font-size: 13px;
  line-height: 18px;
}

button {
  margin: 0;
  padding: 0;
  border: 0;
  background: none;
  color: inherit;
  font: inherit;
  white-space: nowrap;
}

a {
  color: inherit;
  text-decoration: none;
}

.defs {
  position: absolute;
}

/* title and menu */
.titlebar {
  display: flex;
  align-items: center;
  height: 23px;
  flex: none;
  padding-left: 3px;
  background-color: #f3f3f3;
}

.logo {
  width: 16px;
  height: 16px;
  margin-right: 6px;
}

.title {
  font-size: 12px;
}

.winbuttons {
  display: flex;
  margin-left: auto;
}

.winbuttons button {
  width: 45px;
  height: 22px;
  display: flex;
  align-items: center;
  justify-content: center;
}

.winbuttons button:last-child {
  width: 32px;
  margin-left: 6px;
}

.winbuttons svg {
  width: 12px;
  height: 12px;
  fill: none;
  stroke: #222;
}

.menubar {
  display: flex;
  align-items: center;
  gap: 15px;
  height: 20px;
  flex: none;
  padding-left: 8px;
  background-color: #fff;
  font-size: 12px;
}

/* command area */
.command {
  flex: none;
  margin-left: 7px;
  margin-right: 5px;
  background-color: #fff;
  border-top: 1px solid #e4e4e6;
}

.history {
  height: 74px;
  display: flex;
  flex-direction: column;
  justify-content: flex-end;
  overflow: hidden;
  border-bottom: 1px solid #dcdde0;
}

.history p {
  flex: none;
  margin: 0;
  padding-left: 1px;
  line-height: 21px;
}

.prompt {
  display: flex;
  align-items: center;
  height: 17px;
  padding-left: 1px;
  font-size: 12px;
  font-weight: bold;
}

.prompt input {
  flex: 1;
  height: 16px;
  padding: 0;
  border: 0;
  border-left: 1px solid #222;
  margin-left: 2px;
  outline: 0;
  font: inherit;
}

/* toolbars */
.tooltabs {
  display: flex;
  flex: none;
  gap: 1px;
  margin: 4px 0 0 8px;
  height: 23px;
  border-bottom: 1px solid #dadce1;
}

.tooltabs button {
  padding: 0 14px;
  height: 23px;
  color: #444;
}

.tooltabs .active {
  border: 1px solid #dadce1;
  border-bottom: 0;
  border-radius: 6px 0 0 0;
  background-color: #edeff3;
}

.toolbar {
  display: flex;
  flex: none;
  height: 35px;
  padding: 1px 7px;
}

.toolbar button,
.sidebar button {
  width: 28px;
  height: 28px;
  display: flex;
  align-items: center;
  justify-content: center;
}

.toolbar svg,
.sidebar svg {
  width: 22px;
  height: 22px;
}

/* corner mark of buttons that open a flyout */
.fly {
  position: relative;
}

.fly::after {
  content: "";
  position: absolute;
  right: 0;
  bottom: 0;
  border-left: 6px solid transparent;
  border-bottom: 6px solid #777;
}

.workspace {
  display: grid;
  grid-template-columns: 61px 1fr 236px;
  flex: 1;
  min-height: 0;
}

.sidebar {
  display: grid;
  grid-template-columns: 28px 28px;
  grid-auto-rows: 28px;
  align-content: start;
  padding: 4px 0 0 2px;
  border-top: 1px solid #dadce1;
}

.viewarea {
  display: flex;
  flex-direction: column;
  min-width: 0;
  min-height: 0;
  margin-right: 5px;
}

.viewport {
  position: relative;
  flex: 1;
  min-height: 0;
  background-color: #9ba2a9;
}

.scene {
  display: block;
  position: absolute;
  width: 100%;
  height: 100%;
}

.grid {
  stroke: #7f868e;
  stroke-width: 1;
  opacity: .45;
}

.axis-x {
  stroke: #a04444;
}

.axis-y {
  stroke: #479e47;
}

.outline {
  fill: none;
  stroke: #cc4fcf;
}

.curve {
  fill: none;
  stroke: #373b41;
}

.triad {
  fill: none;
  stroke: #6b7077;
}

.triadtext {
  fill: #565b62;
  font-size: 14px;
}

.viewname {
  position: absolute;
  left: 0;
  top: 0;
  display: flex;
  height: 18px;
  background-color: #869ce8;
  color: #26335c;
  font-family: "Noto Sans", sans-serif;
  font-size: 11px;
  font-weight: bold;
}

.viewname span {
  padding: 0 6px;
  border-right: 1px solid #4c5fa6;
}

.viewname i {
  margin: 7px 3px;
  border: 3px solid transparent;
  border-top: 4px solid #1d2747;
  border-bottom: 0;
}

.viewtabs {
  display: flex;
  flex: none;
  height: 21px;
  padding-left: 4px;
  font-size: 12px;
}

.viewtabs button {
  padding: 0 7px;
}

.viewtabs .active {
  border-right: 1px solid #d2d5da;
  border-bottom: 1px solid #d2d5da;
}

.viewtabs svg {
  width: 10px;
  height: 10px;
  fill: none;
  stroke: #aaa;
}

/* layer panel */
.panel {
  display: flex;
  flex-direction: column;
  min-width: 0;
  min-height: 0;
  overflow: hidden;
}

.panel h2 {
  display: flex;
  align-items: center;
  gap: 5px;
  margin: 0;
  height: 18px;
  padding-left: 4px;
  color: #444;
  font-size: 13px;
  font-weight: normal;
}

.panel h2::after {
  content: "";
  flex: 1;
  border-top: 1px solid #dadce1;
}

.paneltabs,
.paneltools {
  display: flex;
  flex: none;
}

.paneltabs {
  height: 23px;
  border-bottom: 1px solid #d6d8dd;
}

.paneltabs button {
  flex: none;
  width: 28px;
  height: 23px;
}

.paneltabs .active {
  border: 1px solid #d6d8dd;
  border-bottom: 0;
  background-color: #eff0f4;
}

.paneltabs svg,
.paneltools svg {
  display: block;
  width: 16px;
  height: 16px;
  margin: auto;
}

.paneltools {
  height: 35px;
  padding-left: 5px;
  border-left: 1px solid #d6d8dd;
}

.paneltools button {
  flex: none;
  width: 23px;
}

.layerlist {
  display: flex;
  flex-direction: column;
  flex: 1;
  min-height: 0;
  margin-bottom: 2px;
  background-color: #fff;
  border-left: 1px solid #d6d8dd;
  border-bottom: 1px solid #d6d8dd;
}

.layerlist table {
  width: 100%;
  table-layout: fixed;
  border-collapse: collapse;
}

.layerlist th {
  height: 20px;
  padding: 0;
  border-right: 1px solid #eeeff1;
  color: #444;
  font-weight: normal;
  line-height: 18px;
  text-align: left;
}

.layerlist th:first-child {
  padding-left: 3px;
}

.layerlist th:nth-child(2),
.layerlist th:nth-child(3),
.layerlist th:nth-child(4),
.layerlist th:nth-child(5) {
  width: 17px;
}

.layerlist th:last-child {
  width: 33px;
  border-right: 0;
  padding-left: 3px;
}

.layerlist td {
  height: 18px;
  padding: 0;
  font-size: 12px;
  line-height: 18px;
  white-space: nowrap;
}

.layerlist td:first-child {
  padding-left: 6px;
}

.layerlist svg {
  display: block;
  width: 14px;
  height: 14px;
  margin: auto;
}

.layerlist .check {
  height: 10px;
  fill: none;
  stroke: #111;
  stroke-width: 1.500;
}

.current {
  font-weight: bold;
}

.selected {
  background-color: #899feb;
}

.swatch {
  display: block;
  width: 12px;
  height: 12px;
  margin: auto;
  border: 1px solid #333;
}

.black { background-color: #000; }
.red { background-color: #c80000; border-color: #fff; }
.purple { background-color: #7b24c8; }
.blue { background-color: #0000ff; }
.green { background-color: #008000; }
.white { background-color: #fff; }

.material {
  display: block;
  width: 14px;
  height: 14px;
  margin-left: 2px;
  border-radius: 50%;
  background-color: #f6f8ff;
}

.scrollbar {
  height: 17px;
  margin-top: auto;
  padding: 7px 50px 0 17px;
  background-color: #f0f0f0;
}

.scrollbar i {
  display: block;
  height: 3px;
  background-color: #8a8a8a;
}

/* object snaps and status */
.osnap {
  display: flex;
  align-items: center;
  gap: 7px;
  flex: none;
  height: 26px;
  padding: 1px 0 0 10px;
}

.osnap label {
  display: flex;
  align-items: center;
  gap: 3px;
  color: #333;
}

.osnap input {
  appearance: none;
  display: flex;
  justify-content: center;
  width: 13px;
  height: 13px;
  margin: 0;
  border: 1px solid #85878a;
  border-radius: 3px;
  background-color: #f8f8f9;
}

.osnap input:checked {
  border-color: #0a5cb8;
  background-color: #0a5cb8;
}

.osnap input:checked::after {
  content: "";
  width: 4px;
  height: 7px;
  border: solid #fff;
  border-width: 0 1px 1px 0;
  transform: rotate(45deg);
}

.osnap .plain {
  border-color: #fff;
  background-color: #fff;
}

.status {
  display: flex;
  flex: none;
  height: 15px;
  border-top: 1px solid #d6d8dd;
  overflow: hidden;
  font-size: 12px;
}

.status > * {
  flex: none;
  height: 14px;
  border-right: 1px solid #d6d8dd;
  color: #333;
  text-align: center;
  line-height: 14px;
  white-space: nowrap;
}

.w34 { width: 34px; }
.w58 { width: 58px; }
.w70 { width: 70px; }
.w74 { width: 74px; }
.w84 { width: 84px; }
.w86 { width: 86px; }

.status .layer {
  display: flex;
  align-items: center;
  gap: 2px;
  width: 164px;
  padding-left: 3px;
}

.status .swatch {
  margin: 0;
}

.status .on {
  background-color: #cfd6ee;
  border-color: #cfd6ee;
  font-weight: bold;
}

.status .memory {
  border: 0;
  padding-left: 4px;
}
```
FILE: script.js
```
// perspective projection of the construction plane
const SIZE = 20

function project(s, t) {
  const w = 1 + 0.01806 * s + 0.005075 * t
  return [
    (897.6 + 3.76 * s + 45.48 * t) / w,
    (795 - 19.17 * s - 5.62 * t) / w
  ]
}

function addLine(parent, from, to, name) {
  const line = document.createElementNS('http://www.w3.org/2000/svg', 'line')
  line.setAttribute('x1', from[0])
  line.setAttribute('y1', from[1])
  line.setAttribute('x2', to[0])
  line.setAttribute('y2', to[1])
  if (name) line.setAttribute('class', name)
  parent.appendChild(line)
}

const grid = document.querySelector('#grid')
for (let i = -SIZE; i <= SIZE; i++) {
  addLine(grid, project(i, -SIZE), project(i, SIZE))
  addLine(grid, project(-SIZE, i), project(SIZE, i))
}

const axes = document.querySelector('#axes')
addLine(axes, project(0, 0), project(-SIZE, 0), 'axis-x')
addLine(axes, project(0, 0), project(0, SIZE), 'axis-y')
```
